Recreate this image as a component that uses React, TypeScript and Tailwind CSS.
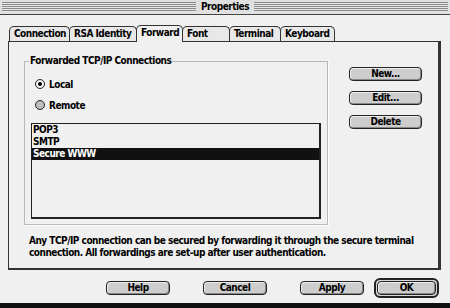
import React from "react";

const font = "font-['DejaVu_Sans_Condensed','DejaVu_Sans',sans-serif] font-bold text-[10px] tracking-[-0.5px]";

const tabs = [
  { label: "Connection", w: "w-[61px]" },
  { label: "RSA Identity", w: "w-[68px]" },
  { label: "Forward", w: "w-[47px]", active: true },
  { label: "Font", w: "w-[48px]" },
  { label: "Terminal", w: "w-[52px]" },
  { label: "Keyboard", w: "w-[55px]" },
];

const Stripes = () => (
  <div className="flex-1 h-[10px] bg-[repeating-linear-gradient(to_bottom,#8a8a8a_0px,#8a8a8a_1px,#e6e6e6_1px,#e6e6e6_2px)]" />
);

const Button = ({ label, className = "" }: { label: string; className?: string }) => (
  <button
    className={`h-[14px] shrink-0 rounded-[4px] border border-[#222] bg-[#cdcdcd] shadow-[inset_1px_1px_0_#eee,inset_-1px_-1px_0_#888] leading-[12px] text-black ${className}`}
  >
    {label}
  </button>
);

const Radio = ({ label, checked }: { label: string; checked?: boolean }) => (
  <div className="h-[12px] flex items-center gap-[4px]">
    <span
      className={`w-[10px] h-[10px] rounded-full border border-[#222] flex items-center justify-center ${
        checked ? "bg-[#f4f4f4]" : "bg-[#bdbdbd]"
      }`}
    >
      {checked && <span className="w-[4px] h-[4px] rounded-full bg-black" />}
    </span>
    {label}
  </div>
);

export default function App() {
  return (
    <div className={`w-[450px] h-[308px] bg-[#f0f0f0] flex flex-col text-black ${font} border-b-[5px] border-[#111]`}>
      {/* title bar */}
      <div className="h-[15px] flex items-center gap-[5px] px-[2px] bg-[#e0e0e0] border-b border-[#444]">
        <Stripes />
        <span className="leading-[12px]">Properties</span>
        <Stripes />
      </div>

      <div className="flex-1 flex flex-col pl-[8px] pr-[9px] pt-[10px]">
        {/* tabs */}
        <div className="flex pl-[1px] h-[17px] items-end">
          {tabs.map((t) => (
            <div
              key={t.label}
              className={`${t.w} -mr-[1px] pl-[4px] rounded-t-[5px] border border-b-0 border-[#333] leading-[14px] ${
                t.active ? "bg-[#f0f0f0] relative z-10 h-[17px]" : "bg-[#e8e8e8] h-[16px]"
              }`}
            >
              {t.label}
            </div>
          ))}
        </div>

        {/* panel */}
        <div className="h-[229px] -mt-[1px] border border-[#333] border-r-[3px] border-b-[2px] bg-[#f0f0f0] flex flex-col px-[15px] pt-[13px]">
          <div className="flex">
            <fieldset className="w-[304px] border border-[#b8b8b8] shadow-[1px_1px_0_#fff] px-[6px] pb-[5px]">
              <legend className="leading-[12px] px-[1px] -ml-[2px]">Forwarded TCP/IP Connections</legend>
              <div className="flex flex-col gap-[9px] pl-[4px] pt-[11px]">
                <Radio label="Local" checked />
                <Radio label="Remote" />
              </div>
              <div className="mt-[12px] h-[96px] border border-[#222] border-r-[2px] border-b-[2px] bg-[#f0f0f0] leading-[12px]">
                <div className="pl-[1px]">POP3</div>
                <div className="pl-[1px]">SMTP</div>
                <div className="pl-[1px] bg-[#111] text-white">Secure WWW</div>
              </div>
            </fieldset>
            <div className="flex flex-col gap-[10px] ml-[21px] pt-[12px]">
              <Button label="New..." className="w-[73px]" />
              <Button label="Edit..." className="w-[73px]" />
              <Button label="Delete" className="w-[73px]" />
            </div>
          </div>
          <p className="mt-[10px] w-[390px] leading-[12px] ml-[5px]">
            Any TCP/IP connection can be secured by forwarding it through the secure terminal connection. All forwardings
            are set-up after user authentication.
          </p>
        </div>

        {/* bottom buttons */}
        <div className="flex items-center mt-[8px]">
          <Button label="Help" className="w-[64px] ml-[98px]" />
          <Button label="Cancel" className="w-[64px] ml-[33px]" />
          <Button label="Apply" className="w-[64px] ml-[33px]" />
          <div className="ml-[10px] shrink-0 rounded-[6px] border-2 border-[#222] p-[1px] bg-[#d8d8d8]">
            <Button label="OK" className="w-[59px] block" />
          </div>
        </div>
      </div>
    </div>
  );
}
